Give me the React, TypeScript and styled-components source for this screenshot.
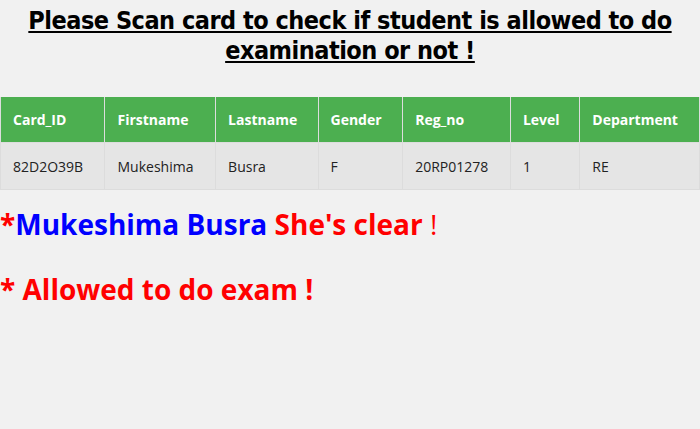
import styled, { createGlobalStyle } from "styled-components";

const GlobalStyle = createGlobalStyle`
  body {
    margin: 0;
    background: #f1f1f1;
    font-family: "Open Sans", "Noto Sans", sans-serif;
  }
`;

const Title = styled.h2`
  margin: 0;
  padding: 6px 20px 0;
  text-align: center;
  font-family: "DejaVu Sans Condensed", "Liberation Sans", sans-serif;
  font-size: 25px;
  font-weight: 700;
  letter-spacing: -0.5px;
  line-height: 30px;
  color: #000;
  text-decoration: underline;
`;

const Table = styled.table`
  margin-top: 31px;
  width: 100%;
  border-collapse: collapse;
  font-size: 14px;
`;

const HeadCell = styled.th<{ $w: number }>`
  width: ${(p) => p.$w}px;
  height: 45px;
  padding: 0 12px;
  text-align: left;
  background: #4caf50;
  color: #fff;
  font-weight: 700;
  border: 1px solid #ddd;
  border-top: none;
`;

const Cell = styled.td`
  height: 46px;
  padding: 0 12px;
  background: #e5e5e5;
  color: #222;
  border: 1px solid #dcdcdc;
`;

const Message = styled.p<{ $gap: number }>`
  margin: ${(p) => p.$gap}px 0 0;
  font-size: 28px;
  font-weight: 700;
  line-height: 40px;
  color: #f00;
`;

const Name = styled.span`
  color: #00f;
`;

const Bang = styled.span`
  font-weight: 400;
`;

const columns = [
  { label: "Card_ID", w: 106 },
  { label: "Firstname", w: 113 },
  { label: "Lastname", w: 101 },
  { label: "Gender", w: 84 },
  { label: "Reg_no", w: 110 },
  { label: "Level", w: 66 },
  { label: "Department", w: 120 },
];

const row = ["82D2O39B", "Mukeshima", "Busra", "F", "20RP01278", "1", "RE"];

const App = (): JSX.Element => {
  return (
    <>
      <GlobalStyle />
      <Title>Please Scan card to check if student is allowed to do examination or not !</Title>
      <Table>
        <thead>
          <tr>
            {columns.map((c) => (
              <HeadCell key={c.label} $w={c.w}>
                {c.label}
              </HeadCell>
            ))}
          </tr>
        </thead>
        <tbody>
          <tr>
            {row.map((v, i) => (
              <Cell key={i}>{v}</Cell>
            ))}
          </tr>
        </tbody>
      </Table>
      <Message $gap={14}>
        *<Name>Mukeshima Busra</Name> She's clear <Bang>!</Bang>
      </Message>
      <Message $gap={25}>* Allowed to do exam !</Message>
    </>
  );
};

export default App;
